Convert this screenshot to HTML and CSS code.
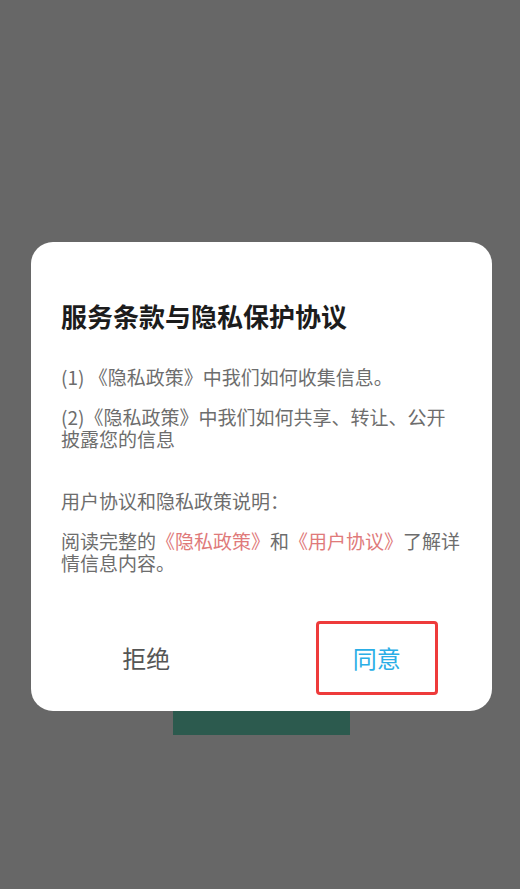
FILE: index.html
```html
<!DOCTYPE html>
<html lang="zh-CN">
<head>
<meta charset="utf-8">
<title>服务条款与隐私保护协议</title>
<link rel="stylesheet" href="styles.css">
</head>
<body>
<div class="screen">
  <div class="dialog">
    <h1 class="title">服务条款与隐私保护协议</h1>
    <p class="para p1">(1) 《隐私政策》中我们如何收集信息。</p>
    <p class="para p2">(2)《隐私政策》中我们如何共享、转让、公开披露您的信息</p>
    <p class="para p3">用户协议和隐私政策说明：</p>
    <p class="para p4">阅读完整的<span class="link">《隐私政策》</span>和<span class="link">《用户协议》</span>了解详情信息内容。</p>
    <div class="actions">
      <div class="action"><span class="btn reject">拒绝</span></div>
      <div class="action"><span class="btn agree">同意</span></div>
    </div>
  </div>
  <div class="under-btn"></div>
</div>
</body>
</html>
```

FILE: styles.css
```css
html, body {
  margin: 0;
  padding: 0;
  background: #676767;
  height: 100%;
}
body {
  font-family: "Noto Sans CJK SC", "Noto Sans", sans-serif;
}
.screen {
  padding: 242px 28px 0 31px;
}
.dialog {
  width: 461px;
  box-sizing: border-box;
  background: #fff;
  border-radius: 22px;
  padding: 56px 30px 16px 30px;
  position: relative;
  z-index: 1;
}
.title {
  margin: 0;
  font-size: 26px;
  line-height: 36px;
  font-weight: 700;
  color: #1c1c1c;
}
.para {
  margin: 0;
  font-size: 19px;
  line-height: 22px;
  color: #6d6d6d;
}
.p1 { margin-top: 32px; }
.p2 { margin-top: 18px; }
.p3 { margin-top: 40px; }
.p4 { margin-top: 18px; }
.link {
  color: #e07a7a;
}
.actions {
  display: flex;
  margin: 47px -30px 0 -30px;
}
.action {
  flex: 1;
  display: flex;
  justify-content: center;
  align-items: center;
  height: 74px;
}
.btn {
  font-size: 24px;
  line-height: 30px;
}
.reject { color: #555; }
.agree {
  color: #2aaee6;
  box-sizing: border-box;
  width: 122px;
  height: 74px;
  border: 3px solid #ee3b3b;
  border-radius: 4px;
  display: flex;
  align-items: center;
  justify-content: center;
}
.under-btn {
  width: 177px;
  height: 24px;
  margin-left: 142px;
  background: #2c5a4e;
}
```
